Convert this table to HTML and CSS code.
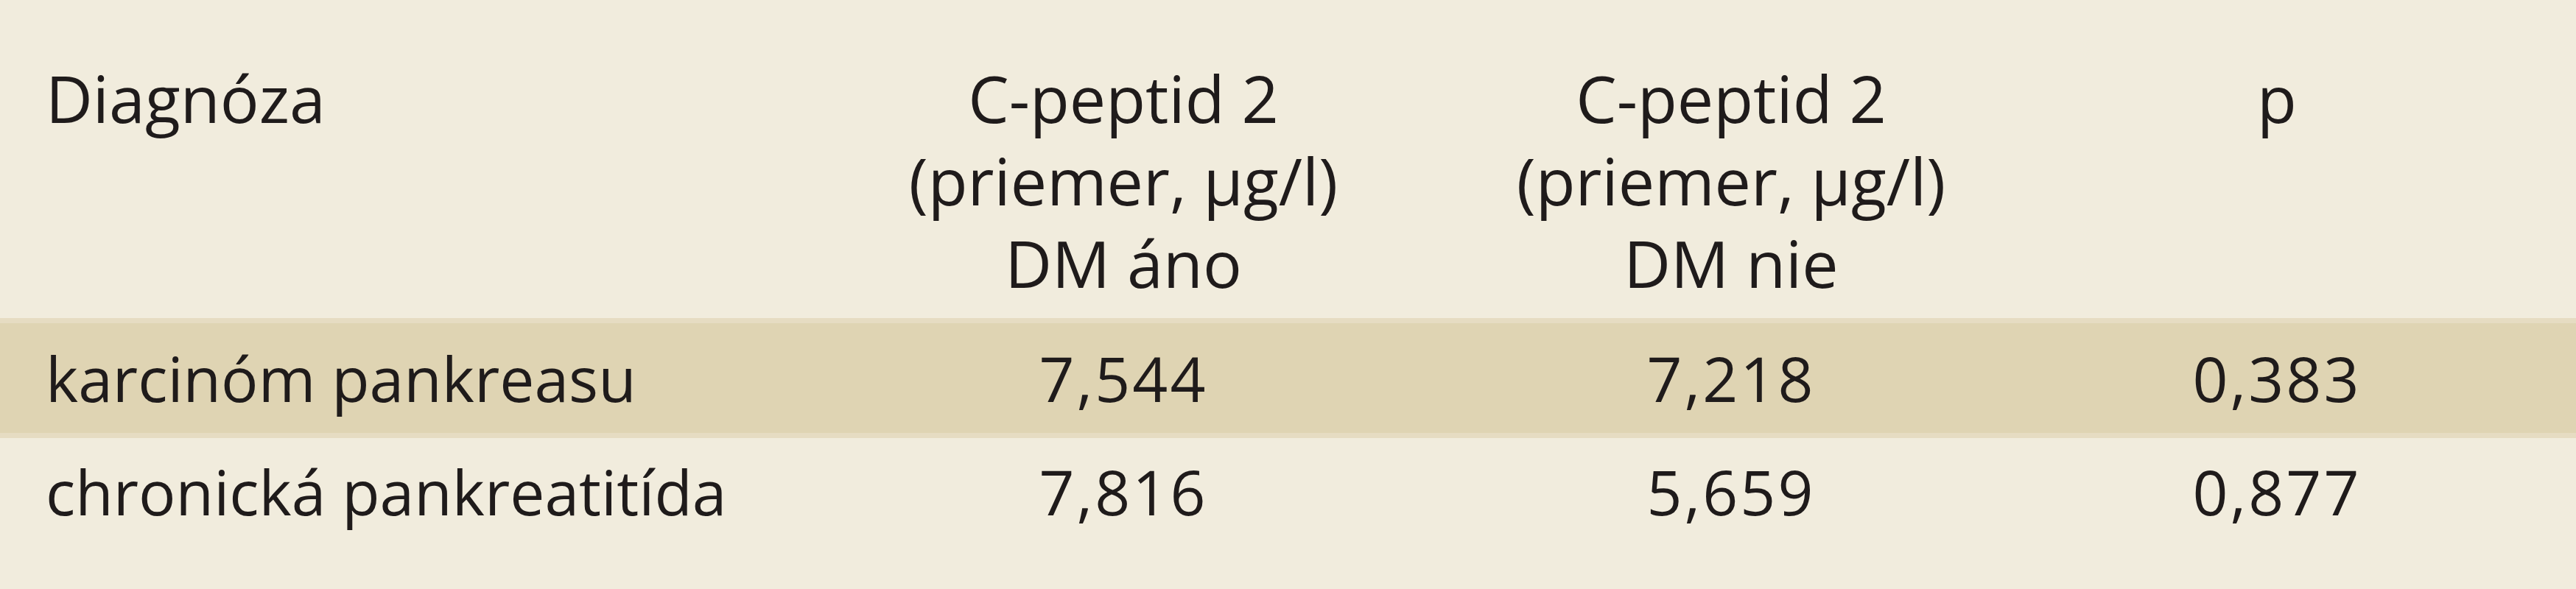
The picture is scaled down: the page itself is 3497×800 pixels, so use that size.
FILE: index.html
```html
<!DOCTYPE html>
<html lang="sk">
<head>
<meta charset="utf-8">
<title>C-peptid 2</title>
<link rel="stylesheet" href="styles.css">
</head>
<body>
<div class="table">
  <div class="row head">
    <div class="cell first">Diagnóza</div>
    <div class="cell">C-peptid 2<br>(priemer, µg/l)<br>DM áno</div>
    <div class="cell">C-peptid 2<br>(priemer, µg/l)<br>DM nie</div>
    <div class="cell">p</div>
  </div>
  <div class="row body shaded">
    <div class="cell first">karcinóm pankreasu</div>
    <div class="cell num">7,544</div>
    <div class="cell num">7,218</div>
    <div class="cell num">0,383</div>
  </div>
  <div class="row body plain">
    <div class="cell first">chronická pankreatitída</div>
    <div class="cell num">7,816</div>
    <div class="cell num">5,659</div>
    <div class="cell num">0,877</div>
  </div>
</div>
</body>
</html>
```

FILE: styles.css
```css
html, body {
  margin: 0;
  padding: 0;
  background: #f1ecdd;
}
body {
  width: 3497px;
  height: 800px;
  overflow: hidden;
  font-family: "Open Sans", "Noto Sans", sans-serif;
  color: #1f1b1b;
}
.table {
  display: flex;
  flex-direction: column;
}
.row {
  display: grid;
  grid-template-columns: 1100px 850px 800px 682px;
}
.cell {
  text-align: center;
  white-space: nowrap;
}
.cell.first {
  text-align: left;
  padding-left: 62px;
}
.head {
  font-size: 88px;
  line-height: 112px;
  padding-top: 77px;
  height: 432px;
  box-sizing: border-box;
}
.body {
  font-size: 84px;
}
.num {
  letter-spacing: 3px;
}
.shaded {
  background: #dfd4b3;
  border-top: 7px solid #e6dcc2;
  border-bottom: 7px solid #e6dcc2;
  height: 163px;
  box-sizing: border-box;
  line-height: 149px;
}
.plain {
  line-height: 145px;
}
```
